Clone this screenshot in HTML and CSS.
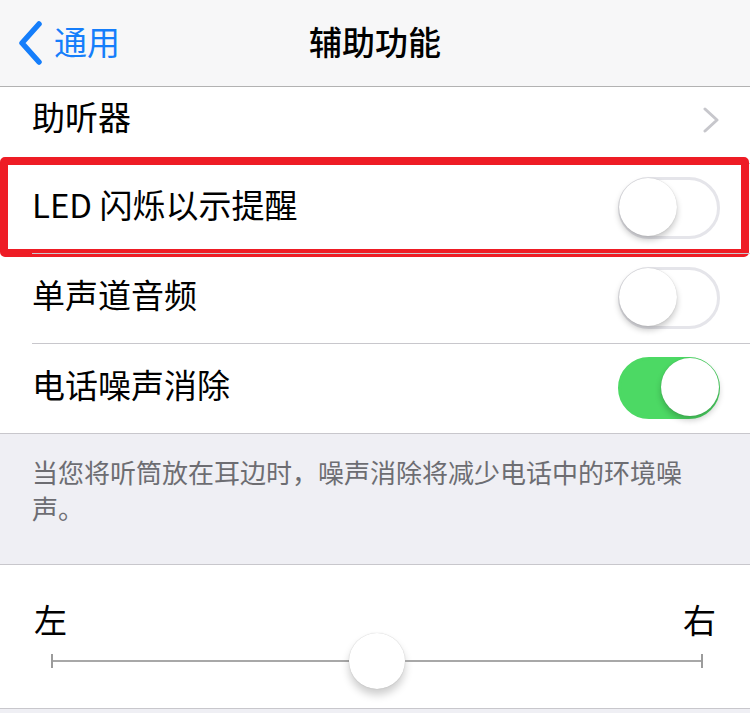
FILE: index.html
```html
<!DOCTYPE html>
<html lang="zh-CN">
<head>
    <meta charset="UTF-8">
    <meta name="viewport" content="width=device-width, initial-scale=1.0">
    <title>辅助功能</title>
    <link rel="stylesheet" href="styles.css">
</head>
<body>
    <header class="navbar">
        <a class="back" href="#">
            <svg class="back-icon" width="28" height="44" viewBox="0 0 28 44">
                <path d="M23 3 L6 22 L23 41" fill="none" stroke="#157efb" stroke-width="5.5" stroke-linecap="round" stroke-linejoin="round"/>
            </svg>
            <span>通用</span>
        </a>
        <h1 class="title">辅助功能</h1>
        <div></div>
    </header>

    <main>
        <section class="group">
            <div class="row row-first">
                <span class="label">助听器</span>
                <svg class="chevron" width="18" height="26" viewBox="0 0 18 26">
                    <path d="M3 2 L15 13 L3 24" fill="none" stroke="#c7c7cc" stroke-width="3" stroke-linecap="round" stroke-linejoin="round"/>
                </svg>
            </div>
            <div class="row highlighted">
                <span class="label">LED 闪烁以示提醒</span>
                <div class="switch"><div class="knob"></div></div>
                <div class="mark"></div>
            </div>
            <div class="row">
                <span class="label">单声道音频</span>
                <div class="switch"><div class="knob"></div></div>
            </div>
            <div class="row row-last">
                <span class="label">电话噪声消除</span>
                <div class="switch on"><div class="knob"></div></div>
            </div>
        </section>

        <p class="footnote">当您将听筒放在耳边时，噪声消除将减少电话中的环境噪声。</p>

        <section class="group balance">
            <div class="balance-labels">
                <span>左</span>
                <span>右</span>
            </div>
            <div class="slider">
                <span class="tick"></span>
                <span class="track"></span>
                <span class="slider-knob"></span>
                <span class="track"></span>
                <span class="tick"></span>
            </div>
        </section>
    </main>
</body>
</html>
```

FILE: styles.css
```css
body {
    margin: 0;
    padding: 0;
    background-color: #efeff4;
    font-family: "Noto Sans CJK SC", "Noto Sans", sans-serif;
    color: #000;
    width: 750px;
    overflow: hidden;
}

.navbar {
    display: grid;
    grid-template-columns: 1fr auto 1fr;
    align-items: center;
    box-sizing: border-box;
    height: 87px;
    padding-bottom: 4px;
    background-color: #f7f7f8;
    border-bottom: 1px solid #b2b2b2;
}

.back {
    display: flex;
    align-items: center;
    gap: 10px;
    padding-left: 16px;
    color: #157efb;
    text-decoration: none;
    font-size: 33px;
}

.back-icon {
    display: block;
    margin-top: 4px;
}

.title {
    margin: 0;
    font-size: 33px;
    font-weight: 500;
}

.group {
    background: #fff;
}

.row {
    position: relative;
    display: flex;
    align-items: center;
    justify-content: space-between;
    height: 90px;
    padding: 0 30px 0 32px;
    font-size: 33px;
}

.label {
    margin-bottom: 8px;
}

.row + .row::before {
    content: "";
    position: absolute;
    top: 0;
    left: 32px;
    right: 0;
    border-top: 1px solid #c8c7cc;
}

.row-first {
    box-sizing: border-box;
    height: 76px;
    padding-bottom: 10px;
}

.row-last {
    border-bottom: 1px solid #c8c7cc;
}

.chevron {
    display: block;
}

.highlighted .mark {
    position: absolute;
    top: -6px;
    bottom: -4px;
    left: 0;
    right: 1px;
    border: 8px solid #ee1c25;
    border-radius: 5px;
}

.switch {
    position: relative;
    box-sizing: border-box;
    width: 102px;
    height: 62px;
    border: 3px solid #e5e5ea;
    border-radius: 31px;
    background: #fff;
}

.knob {
    position: absolute;
    top: -2px;
    left: -2px;
    width: 58px;
    height: 58px;
    border-radius: 50%;
    background: #fff;
    box-shadow: 0 4px 6px rgba(0, 0, 0, 0.22), 0 0 1px rgba(0, 0, 0, 0.2);
}

.switch.on {
    border-color: #4cd964;
    background: #4cd964;
}

.switch.on .knob {
    left: auto;
    right: -2px;
}

.footnote {
    margin: 0;
    padding: 20px 50px 38px 32px;
    font-size: 26px;
    line-height: 36px;
    color: #6d6d72;
    border-bottom: 1px solid #c8c7cc;
}

.balance {
    padding: 34px 34px 19px 34px;
    border-bottom: 1px solid #c8c7cc;
}

.balance-labels {
    display: flex;
    justify-content: space-between;
    font-size: 33px;
    line-height: 40px;
}

.slider {
    display: flex;
    align-items: center;
    height: 56px;
    margin-top: -6px;
    padding: 0 13px 0 17px;
}

.tick {
    width: 2px;
    height: 14px;
    background: #9b9b9b;
}

.track {
    flex: 1;
    height: 2px;
    background: #a8a8a8;
}

.slider-knob {
    width: 56px;
    height: 56px;
    border-radius: 50%;
    background: #fff;
    box-shadow: 0 6px 8px rgba(0, 0, 0, 0.2), 0 0 1px rgba(0, 0, 0, 0.25);
}
```
